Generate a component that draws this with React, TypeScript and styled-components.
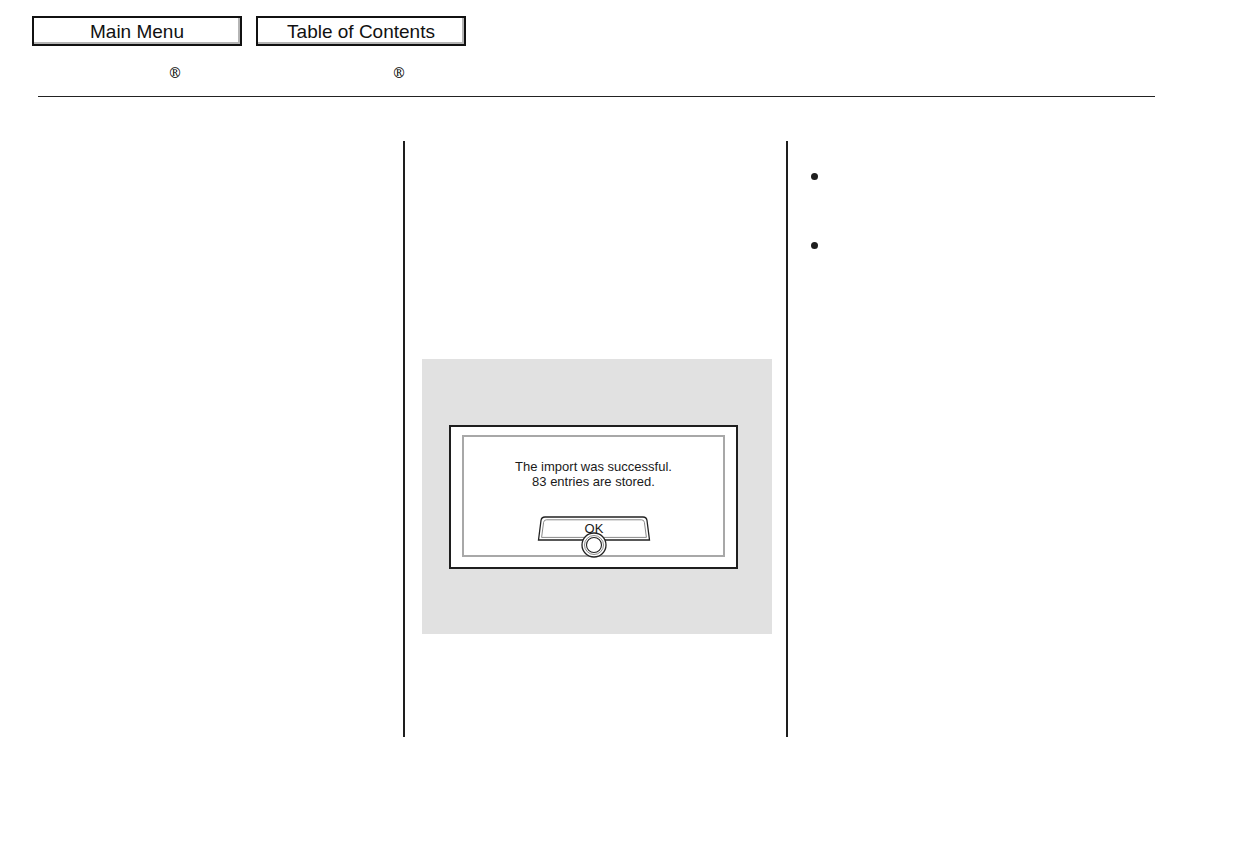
import styled, { createGlobalStyle } from "styled-components";

const GlobalStyle = createGlobalStyle`
  html, body {
    margin: 0;
    padding: 0;
    background: #ffffff;
  }

  body {
    font-family: "Liberation Sans", Arial, sans-serif;
    color: #1a1a1a;
  }
`;

const navLinks = [
  { label: "Main Menu", href: "#main-menu" },
  { label: "Table of Contents", href: "#contents" },
];

const OkButton = () => (
  <OkSvg width="112" height="42" viewBox="0 0 112 42">
    <path
      d="M7 2 L105 2 Q108.5 2 109 5.5 L111.5 25 L0.5 25 L3 5.5 Q3.5 2 7 2 Z"
      fill="#ffffff"
      stroke="#222222"
      strokeWidth="1.3"
    />
    <path
      d="M8.5 4.8 L103.5 4.8 Q106 4.8 106.4 7.3 L108.4 22.4 L3.6 22.4 L5.6 7.3 Q6 4.8 8.5 4.8 Z"
      fill="none"
      stroke="#7a7a7a"
      strokeWidth="0.9"
    />
    <text
      x="56"
      y="17.5"
      textAnchor="middle"
      fontFamily="Liberation Sans, Arial, sans-serif"
      fontSize="13"
      fill="#1a1a1a"
    >
      OK
    </text>
    <circle cx="56" cy="30" r="12" fill="#ffffff" stroke="#222222" strokeWidth="1.3" />
    <circle cx="56" cy="30" r="9.5" fill="none" stroke="#7a7a7a" strokeWidth="0.9" />
    <circle cx="56" cy="30" r="7.5" fill="none" stroke="#222222" strokeWidth="1.1" />
  </OkSvg>
);

export default function App() {
  return (
    <Page>
      <GlobalStyle />
      <TopNav>
        {navLinks.map((link) => (
          <NavItem key={link.label}>
            <NavButton href={link.href}>{link.label}</NavButton>
            <Mark>®</Mark>
          </NavItem>
        ))}
      </TopNav>

      <Rule />

      <Columns>
        <Column />

        <Column $divided>
          <ScreenPanel>
            <Dialog>
              <DialogFrame>
                <Message>
                  The import was successful.
                  <br />
                  83 entries are stored.
                </Message>
                <OkButton />
              </DialogFrame>
            </Dialog>
          </ScreenPanel>
        </Column>

        <Column $divided>
          <BulletList>
            <Bullet />
            <Bullet />
          </BulletList>
        </Column>
      </Columns>
    </Page>
  );
}

const Page = styled.div`
  width: 1237px;
  min-height: 860px;
  padding-top: 16px;
  box-sizing: border-box;
`;

const TopNav = styled.nav`
  display: flex;
  gap: 14px;
  padding-left: 32px;
`;

const NavItem = styled.div`
  display: flex;
  flex-direction: column;
  width: 210px;
`;

const NavButton = styled.a`
  display: flex;
  justify-content: center;
  align-items: center;
  height: 30px;
  box-sizing: border-box;
  padding-top: 2px;
  border: 2px solid #111111;
  box-shadow: inset -2px -2px 0 #b5b5b5;
  background: #ffffff;
  color: #111111;
  font-size: 19px;
  line-height: 20px;
  text-decoration: none;
  white-space: nowrap;
`;

const Mark = styled.span`
  margin-top: 19px;
  padding-left: 136px;
  font-family: "DejaVu Serif", serif;
  font-size: 14px;
  line-height: 16px;
  color: #000000;
`;

const Rule = styled.hr`
  margin: 15px 0 0 38px;
  width: 1117px;
  height: 0;
  border: none;
  border-top: 1px solid #222222;
`;

const Columns = styled.main`
  display: grid;
  grid-template-columns: 365px 383px 369px;
  margin: 44px 0 0 38px;
  height: 596px;
`;

const Column = styled.section<{ $divided?: boolean }>`
  border-left: ${(p) => (p.$divided ? "2px solid #1e1e1e" : "none")};
`;

const ScreenPanel = styled.div`
  margin: 218px 14px 0 17px;
  height: 275px;
  background: #e1e1e1;
  padding: 66px 0 0 27px;
  box-sizing: border-box;
`;

const Dialog = styled.div`
  width: 289px;
  height: 144px;
  box-sizing: border-box;
  padding: 8px 11px 10px 11px;
  border: 2px solid #1e1e1e;
  background: #ffffff;
`;

const DialogFrame = styled.div`
  display: flex;
  flex-direction: column;
  align-items: center;
  height: 100%;
  box-sizing: border-box;
  border: 2px solid #a8a8a8;
  padding-top: 22px;
`;

const Message = styled.p`
  margin: 0;
  font-size: 13px;
  line-height: 15px;
  text-align: center;
  color: #1a1a1a;
`;

const OkSvg = styled.svg`
  display: block;
  margin-top: auto;
  margin-bottom: -2px;
  overflow: visible;
`;

const BulletList = styled.ul`
  list-style: none;
  margin: 0;
  padding: 32px 0 0 23px;
  display: flex;
  flex-direction: column;
  gap: 62px;
`;

const Bullet = styled.li`
  width: 7px;
  height: 7px;
  border-radius: 50%;
  background: #1e1e1e;
`;
